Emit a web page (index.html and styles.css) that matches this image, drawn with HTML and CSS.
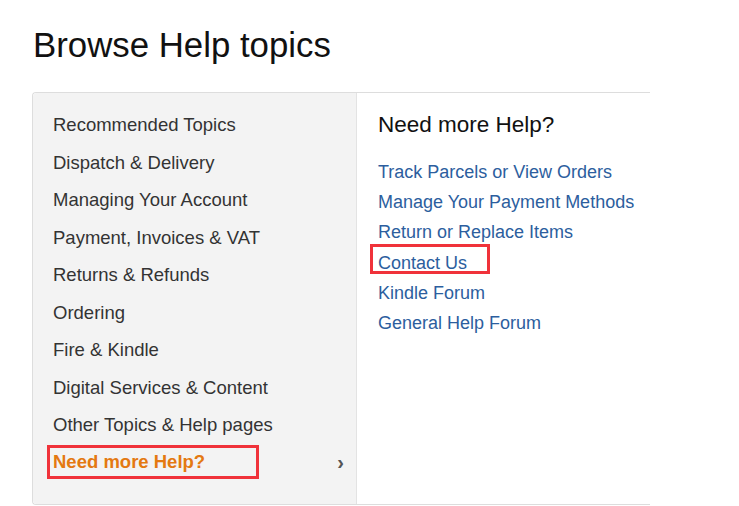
FILE: index.html
```html
<!DOCTYPE html>
<html lang="en">
<head>
    <meta charset="UTF-8">
    <title>Browse Help topics</title>
    <link rel="stylesheet" href="styles.css">
</head>
<body>
    <h1 class="page-title">Browse Help topics</h1>

    <div class="help-box">
        <ul class="topic-list">
            <li>Recommended Topics</li>
            <li>Dispatch &amp; Delivery</li>
            <li>Managing Your Account</li>
            <li>Payment, Invoices &amp; VAT</li>
            <li>Returns &amp; Refunds</li>
            <li>Ordering</li>
            <li>Fire &amp; Kindle</li>
            <li>Digital Services &amp; Content</li>
            <li>Other Topics &amp; Help pages</li>
            <li class="active">
                <span class="marked">Need more Help?</span>
                <span class="chevron">&rsaquo;</span>
            </li>
        </ul>

        <div class="topic-detail">
            <h2>Need more Help?</h2>
            <ul class="link-list">
                <li><a href="#">Track Parcels or View Orders</a></li>
                <li><a href="#">Manage Your Payment Methods</a></li>
                <li><a href="#">Return or Replace Items</a></li>
                <li><a href="#" class="marked">Contact Us</a></li>
                <li><a href="#">Kindle Forum</a></li>
                <li><a href="#">General Help Forum</a></li>
            </ul>
        </div>
    </div>
</body>
</html>
```

FILE: styles.css
```css
* {
    margin: 0;
    padding: 0;
    box-sizing: border-box;
}

body {
    font-family: 'Liberation Sans', Arial, sans-serif;
    color: #111;
    background: #fff;
    padding: 24px 0 0 32px;
}

.page-title {
    font-size: 34.8px;
    font-weight: 400;
    line-height: 42px;
    margin-left: 1px;
    margin-bottom: 26px;
}

.help-box {
    display: flex;
    width: 618px;
    height: 413px;
    border: 1px solid #ddd;
    border-right: none;
    border-radius: 4px 0 0 4px;
}

/* left column: topic categories */
.topic-list {
    list-style: none;
    width: 324px;
    background: #f3f3f3;
    border-right: 1px solid #e3e3e3;
    border-radius: 4px 0 0 4px;
    padding: 13px 0 0 20px;
}

.topic-list li {
    font-size: 18.5px;
    line-height: 37.5px;
    color: #333;
}

.topic-list li.active {
    display: flex;
    justify-content: space-between;
    align-items: center;
    padding-right: 12px;
}

.topic-list .marked {
    color: #e47911;
    font-weight: 700;
    outline: 3px solid #f0323a;
    padding: 0 51px 0 3px;
    margin-left: -3px;
    line-height: 28px;
}

.chevron {
    color: #555;
    font-size: 20px;
    font-weight: 700;
}

/* right column: links for the selected topic */
.topic-detail {
    flex: 1;
    background: #fff;
    padding: 19px 0 0 21px;
}

.topic-detail h2 {
    font-size: 22.5px;
    font-weight: 400;
    line-height: 26px;
    margin-bottom: 19px;
}

.link-list {
    list-style: none;
}

.link-list li {
    font-size: 18px;
    line-height: 30px;
}

.link-list a {
    color: #2c5e9e;
    text-decoration: none;
}

.link-list a.marked {
    display: inline-block;
    outline: 3px solid #f0323a;
    padding: 8px 20px 0 5px;
    margin-left: -5px;
    line-height: 16px;
}
```
